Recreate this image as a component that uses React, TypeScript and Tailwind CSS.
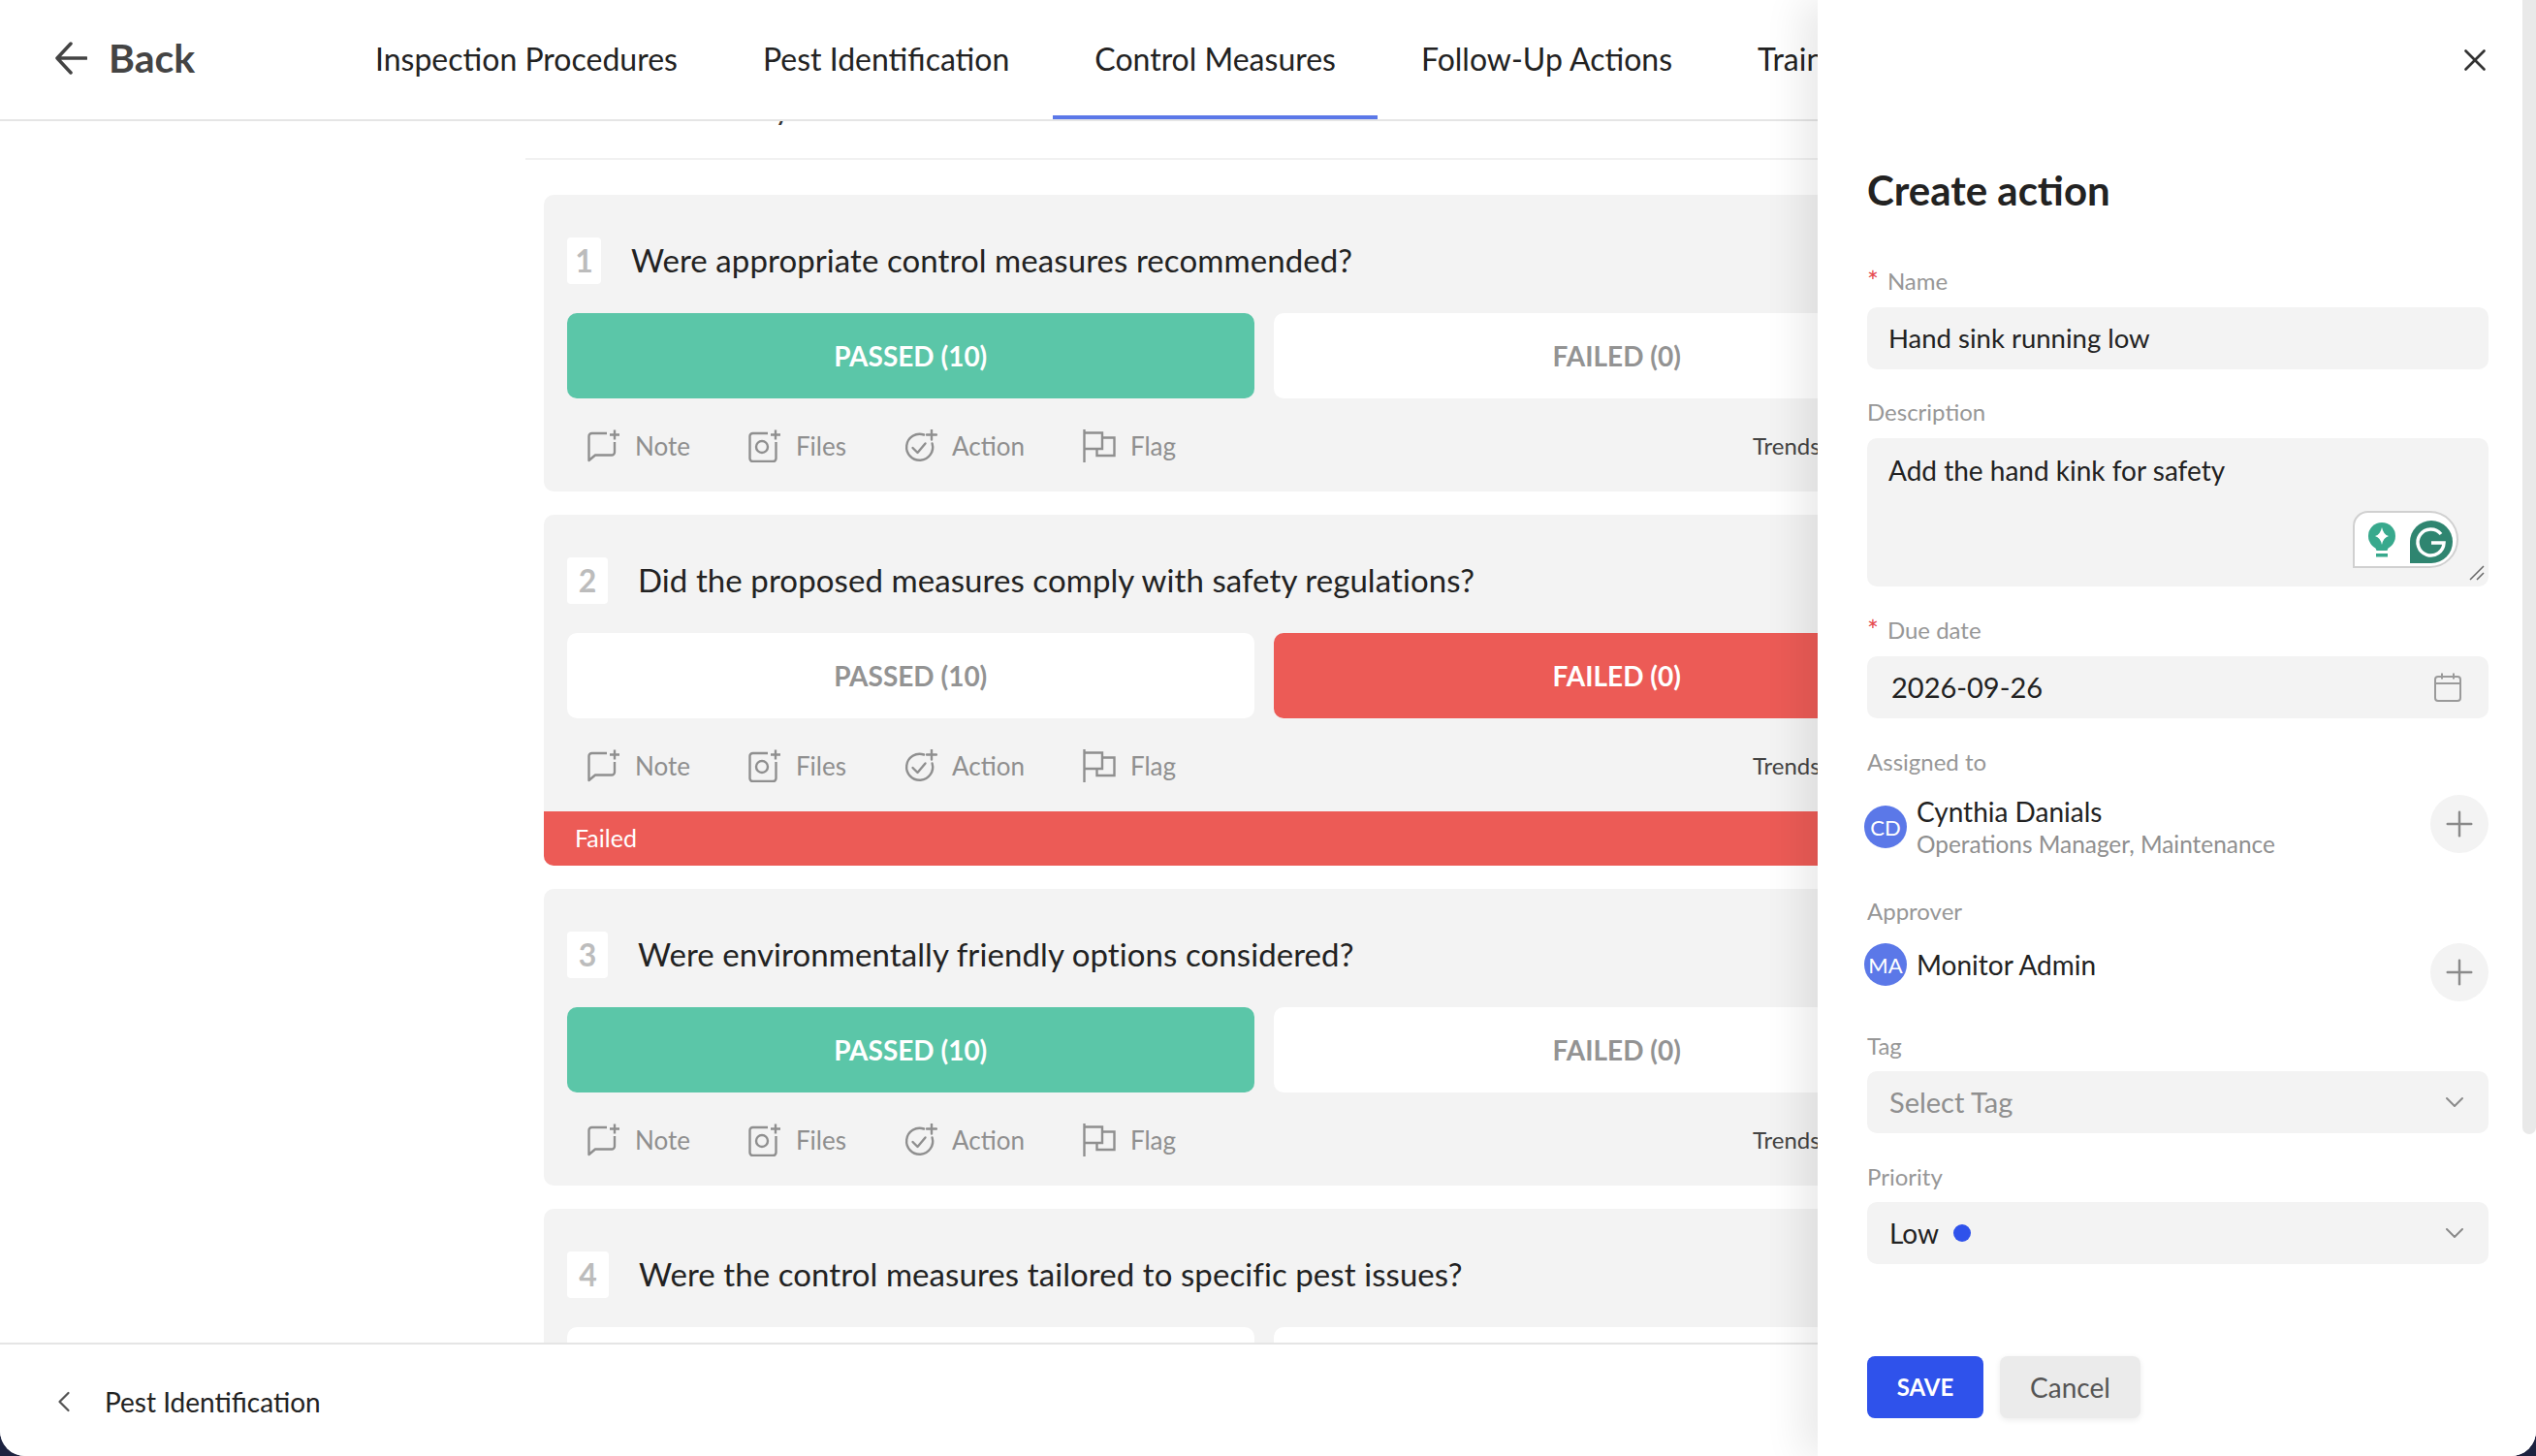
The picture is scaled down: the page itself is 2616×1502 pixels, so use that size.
import { ChevronDown, ChevronLeft, Plus, X } from "lucide-react"

const QUESTIONS = [
	{ n: 1, text: "Were appropriate control measures recommended?", state: "passed" },
	{ n: 2, text: "Did the proposed measures comply with safety regulations?", state: "failed" },
	{ n: 3, text: "Were environmentally friendly options considered?", state: "passed" },
]

const TABS = ["Inspection Procedures", "Pest Identification", "Control Measures", "Follow-Up Actions", "Training"]

const NUMBER_WIDTH: Record<number, string> = {
	1: "w-[35px]",
	2: "w-[42px]",
	3: "w-[42px]",
	4: "w-[43px]",
}

function NoteIcon() {
	return (
		<svg width="34" height="34" viewBox="0 0 34 34" fill="none" stroke="#8f8f8f" strokeWidth="2.4" strokeLinejoin="round">
			<path d="M20 4H4.5a3 3 0 0 0-3 3v25l6.5-5.5h17a3 3 0 0 0 3-3V13" />
			<path d="M28 0.5v10M23 5.5h10" />
		</svg>
	)
}

function FilesIcon() {
	return (
		<svg width="34" height="34" viewBox="0 0 34 34" fill="none" stroke="#8f8f8f" strokeWidth="2.4" strokeLinejoin="round">
			<path d="M20 4H4.5a3 3 0 0 0-3 3v23a3 3 0 0 0 3 3h21a3 3 0 0 0 3-3V13" />
			<circle cx="14" cy="18" r="6" />
			<path d="M28 0.5v10M23 5.5h10" />
		</svg>
	)
}

function ActionIcon() {
	return (
		<svg width="34" height="34" viewBox="0 0 34 34" fill="none" stroke="#8f8f8f" strokeWidth="2.4" strokeLinecap="round" strokeLinejoin="round">
			<path d="M20 5.5a13.5 13.5 0 1 0 8.6 9" />
			<path d="M8.5 19l5 5 8-9.5" />
			<path d="M28 0.5v10M23 5.5h10" />
		</svg>
	)
}

function FlagIcon() {
	return (
		<svg width="34" height="34" viewBox="0 0 34 34" fill="none" stroke="#8f8f8f" strokeWidth="2.4">
			<path d="M1.5 0v34M1.5 3.5H20V20H1.5" />
			<path d="M20 8.5h12.5V27H14.5v-7" />
		</svg>
	)
}

function Calendar() {
	return (
		<svg width="28" height="30" viewBox="0 0 28 30" fill="none" stroke="#9a9a9a" strokeWidth="2">
			<rect x="1" y="4" width="26" height="25" rx="3" />
			<path d="M1 11h26M8 0.5v6M20 0.5v6" />
		</svg>
	)
}

function Grammarly() {
	return (
		<div className="absolute left-[501px] top-[75px] flex h-[59px] w-[109px] items-center rounded-tl-[16px] rounded-r-[30px] border-2 border-[#d0d0d0] bg-white">
			<svg width="105" height="55" viewBox="0 0 105 55" fill="none">
				<circle cx="28" cy="24" r="14" fill="#38a98d" />
				<path d="M21 35h14l-1.5 4h-11z" fill="#38a98d" />
				<path d="M22 42h12v3.5H22z" fill="#38a98d" />
				<path d="M28 15q1.5 7.5 7 9q-5.5 1.5-7 9q-1.5-7.500-7-9q5.500-1.500 7-9z" fill="#fff" />
				<path d="M57 52V30a22 22 0 1 1 22 22z" fill="#2f8570" />
				<path d="M89 22a13.500 13.500 0 1 0 3 9h-13" stroke="#fff" strokeWidth="3.500" />
			</svg>
		</div>
	)
}

function Toolbar() {
	return (
		<div className="mt-[32px] flex h-[33px] items-center justify-between">
			<div className="flex items-center gap-[60px] pl-[21px] text-[26px] text-[#8f8f8f]">
				<div className="flex items-center gap-[15px]"><NoteIcon /><span className="pt-[2px]">Note</span></div>
				<div className="flex items-center gap-[15px]"><FilesIcon /><span className="pt-[2px]">Files</span></div>
				<div className="flex items-center gap-[15px]"><ActionIcon /><span className="pt-[2px]">Action</span></div>
				<div className="flex items-center gap-[15px]"><FlagIcon /><span className="pt-[2px]">Flag</span></div>
			</div>
			<div className="w-[214px] shrink-0 text-[24px] text-[#444]">Trends</div>
		</div>
	)
}

function Verdict({ label, active, color }: { label: string; active: boolean; color: string }) {
	return (
		<div className={`flex h-[88px] w-[709px] items-center justify-center rounded-[10px] text-[28px] font-bold ${active ? `${color} text-white` : "bg-white text-[#939393]"}`}>
			{label}
		</div>
	)
}

function QuestionCard({ n, text, state }: { n: number; text: string; state: string }) {
	return (
		<div className="overflow-hidden rounded-[10px] bg-[#f3f3f3]">
			<div className="px-[24px] pt-[44px] pb-[31px]">
				<div className="flex h-[48px] items-center gap-[31px]">
					<div className={`flex h-[48px] items-center justify-center rounded-[4px] bg-white text-[32px] font-bold text-[#bcbcbc] ${NUMBER_WIDTH[n]}`}>{n}</div>
					<div className="text-[33px] tracking-[0.08px] text-[#222]">{text}</div>
				</div>
				<div className="mt-[30px] flex gap-[20px]">
					<Verdict label="PASSED (10)" active={state === "passed"} color="bg-[#5bc6a8]" />
					<Verdict label="FAILED (0)" active={state === "failed"} color="bg-[#ec5b56]" />
				</div>
				<Toolbar />
			</div>
			{state === "failed" && (
				<div className="flex h-[56px] items-center bg-[#ec5b56] pl-[32px] text-[25px] text-white">Failed</div>
			)}
		</div>
	)
}

function Label({ children, required }: { children: string; required?: boolean }) {
	return (
		<div className="flex h-[30px] items-center text-[24px] text-[#979797]">
			{required && <span className="mr-[9px] text-[28px] text-[#e5484d]">*</span>}
			{children}
		</div>
	)
}

function Person({ initials, name, role }: { initials: string; name: string; role?: string }) {
	return (
		<div className="flex h-[60px] items-start justify-between">
			<div className="flex gap-[10px]">
				<div className={`-ml-[3px] flex h-[44px] w-[44px] items-center justify-center rounded-full bg-[#5b78e8] text-[22px] text-white ${role ? "mt-[11px]" : ""}`}>
					{initials}
				</div>
				<div className={role ? "-mt-[1px]" : "mt-[4px]"}>
					<div className="h-[36px] text-[28px] leading-[36px] text-[#222]">{name}</div>
					{role && <div className="text-[24.4px] leading-[32px] text-[#8f8f8f]">{role}</div>}
				</div>
			</div>
			<div className="flex h-[60px] w-[60px] items-center justify-center rounded-full bg-[#f3f3f3]">
				<Plus size={42} strokeWidth={1.4} className="text-[#8a8a8a]" />
			</div>
		</div>
	)
}

function Select({ children }: { children: React.ReactNode }) {
	return (
		<div className="mt-[11px] flex h-[64px] items-center justify-between rounded-[10px] bg-[#f3f3f3] pr-[19px] pl-[23px] text-[28px]">
			{children}
			<ChevronDown size={32} strokeWidth={1.5} className="text-[#8a8a8a]" />
		</div>
	)
}

export default function App() {
	return (
		<div className="relative h-screen w-screen overflow-hidden bg-[#1d2340] font-[Lato,sans-serif]">
			<div className="flex h-full flex-col overflow-hidden rounded-b-[26px] bg-white">
				{/* top nav */}
				<div className="z-10 flex h-[125px] shrink-0 overflow-hidden border-b-2 border-[#e5e5e5] bg-white">
					<div className="flex w-[344px] shrink-0 items-center gap-[22px] pb-[3px] pl-[57px]">
						<svg width="33" height="34" viewBox="0 0 33 34" fill="none" stroke="#444" strokeWidth="3.500" strokeLinecap="round" strokeLinejoin="round">
							<path d="M32 17H2M16 2L2 17l14 15" />
						</svg>
						<span className="text-[41px] font-bold text-[#444]">Back</span>
					</div>
					<div className="flex shrink-0 gap-[2px]">
						{TABS.map((tab) => (
							<div
								key={tab}
								className={`flex h-[123px] items-center whitespace-nowrap border-b-[4px] px-[43px] pt-[2px] text-[32px] text-[#222] ${tab === "Control Measures" ? "border-[#5b78e8]" : "border-transparent"}`}
							>
								{tab}
							</div>
						))}
					</div>
				</div>

				{/* questions */}
				<div className="min-h-0 flex-1 overflow-hidden">
					<div className="ml-[542px] w-[1523px]">
						<div className="-mt-[37px] h-[77px] whitespace-nowrap border-b-2 border-[#f1f1f1] pl-[142px] text-[32px] leading-[46px] text-[#333]">
							Summary
						</div>
						<div className="mt-[36px] flex flex-col gap-[24px] px-[19px]">
							{QUESTIONS.map((q) => (
								<QuestionCard key={q.n} {...q} />
							))}
							<QuestionCard n={4} text="Were the control measures tailored to specific pest issues?" state="none" />
						</div>
					</div>
				</div>

				{/* bottom nav */}
				<div className="z-10 flex h-[117px] shrink-0 items-center gap-[24px] border-t-2 border-[#e5e5e5] bg-white pt-[2px] pl-[48px] text-[28px] text-[#222]">
					<ChevronLeft size={36} strokeWidth={1.5} className="text-[#555]" />
					Pest Identification
				</div>
			</div>

			{/* create action drawer */}
			<div className="absolute top-0 right-0 bottom-0 z-20 w-[741px] rounded-br-[26px] bg-white pt-[171px] pr-[49px] pl-[51px] shadow-[-16px_0_40px_rgba(0,0,0,0.09)]">
				<X size={38} strokeWidth={1.7} className="absolute top-[43px] right-[44px] text-[#333]" />
				<div className="absolute top-0 right-0 h-[1170px] w-[14px] rounded-b-[7px] bg-[#e9e9e9]" />

				<div className="h-[50px] text-[42px] leading-[50px] font-bold text-[#222]">Create action</div>

				<div className="mt-[54px]">
					<Label required>Name</Label>
					<div className="mt-[12px] flex h-[64px] items-center rounded-[10px] bg-[#f3f3f3] pl-[22px] text-[27.5px] text-[#222]">Hand sink running low</div>
				</div>

				<div className="mt-[29px]">
					<Label>Description</Label>
					<div className="relative mt-[12px] h-[153px] rounded-[10px] bg-[#f3f3f3] pt-[12px] pl-[22px] text-[28px] text-[#222]">
						Add the hand kink for safety
						<Grammarly />
						<svg className="absolute right-[4px] bottom-[6px]" width="16" height="16" viewBox="0 0 16 16" stroke="#666" strokeWidth="1.500">
							<path d="M1 15L15 1M8 15l7-7" />
						</svg>
					</div>
				</div>

				<div className="mt-[30px]">
					<Label required>Due date</Label>
					<div className="mt-[12px] flex h-[64px] items-center justify-between rounded-[10px] bg-[#f3f3f3] pr-[28px] pl-[25px] text-[29px] text-[#222]">
						2026-09-26
						<Calendar />
					</div>
				</div>

				<div className="mt-[30px]">
					<Label>Assigned to</Label>
					<div className="mt-[19px]">
						<Person initials="CD" name="Cynthia Danials" role="Operations Manager, Maintenance" />
					</div>
				</div>

				<div className="mt-[45px]">
					<Label>Approver</Label>
					<div className="mt-[18px]">
						<Person initials="MA" name="Monitor Admin" />
					</div>
				</div>

				<div className="mt-[31px]">
					<Label>Tag</Label>
					<Select><span className="text-[29px] text-[#8f8f8f]">Select Tag</span></Select>
				</div>

				<div className="mt-[30px]">
					<Label>Priority</Label>
					<Select>
						<span className="flex items-center gap-[15px] text-[#222]">
							Low
							<span className="h-[18px] w-[18px] rounded-full bg-[#2f52eb]" />
						</span>
					</Select>
				</div>

				<div className="mt-[95px] flex gap-[17px]">
					<div className="flex h-[64px] w-[120px] items-center justify-center rounded-[8px] bg-[#2f52eb] text-[24px] font-bold text-white">SAVE</div>
					<div className="flex h-[64px] w-[145px] items-center justify-center rounded-[8px] bg-[#ebebeb] text-[28px] text-[#555] shadow-[0_2px_6px_rgba(0,0,0,0.08)]">Cancel</div>
				</div>
			</div>
		</div>
	)
}
